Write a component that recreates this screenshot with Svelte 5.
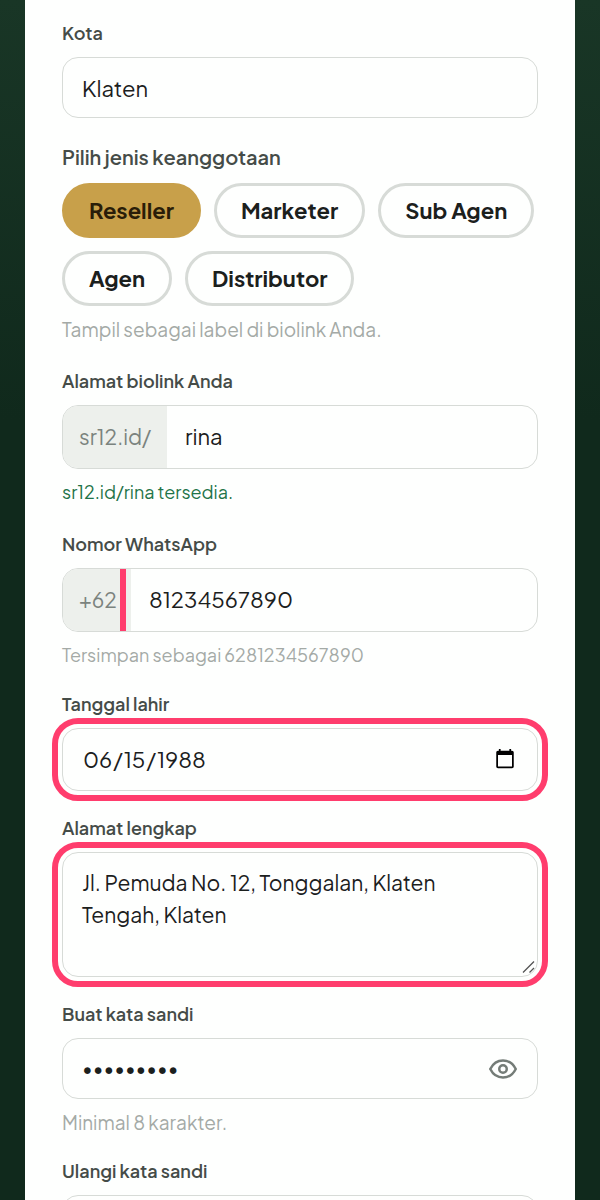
<script lang="ts">
  const types = ["Reseller", "Marketer", "Sub Agen", "Agen", "Distributor"];

  let city = $state("Klaten");
  let membership = $state("Reseller");
  let slug = $state("rina");
  let phone = $state("81234567890");
  let birthDate = $state("1988-06-15");
  let address = $state("Jl. Pemuda No. 12, Tonggalan, Klaten Tengah, Klaten");
  let password = $state("rahasia12");
  let repeat = $state("");
  let showPassword = $state(false);
</script>

<main class="page">
  <form class="card">
    <div class="field">
      <label for="city">Kota</label>
      <input id="city" class="control" type="text" bind:value={city} />
    </div>

    <div class="field wide" role="group" aria-labelledby="type-label">
      <span id="type-label" class="legend">Pilih jenis keanggotaan</span>
      <div class="chips">
        {#each types as type}
          <button
            type="button"
            class="chip"
            class:active={membership === type}
            aria-pressed={membership === type}
            onclick={() => (membership = type)}
          >
            {type}
          </button>
        {/each}
      </div>
      <p class="hint">Tampil sebagai label di biolink Anda.</p>
    </div>

    <div class="field wide">
      <label for="slug">Alamat biolink Anda</label>
      <div class="control split">
        <span class="prefix">sr12.id/</span>
        <input id="slug" type="text" bind:value={slug} />
      </div>
      <p class="hint ok">sr12.id/{slug} tersedia.</p>
    </div>

    <div class="field wide">
      <label for="phone">Nomor WhatsApp</label>
      <div class="control split">
        <span class="prefix marked">+62</span>
        <input id="phone" type="tel" bind:value={phone} />
      </div>
      <p class="hint">Tersimpan sebagai 62{phone}</p>
    </div>

    <div class="field close">
      <label for="birth">Tanggal lahir</label>
      <input id="birth" class="control date highlight" type="date" bind:value={birthDate} />
    </div>

    <div class="field">
      <label for="address">Alamat lengkap</label>
      <textarea id="address" class="control address highlight" bind:value={address}></textarea>
    </div>

    <div class="field">
      <label for="password">Buat kata sandi</label>
      <div class="control secret">
        <input id="password" type={showPassword ? "text" : "password"} bind:value={password} />
        <button
          type="button"
          class="eye"
          aria-label="Tampilkan kata sandi"
          onclick={() => (showPassword = !showPassword)}
        >
          <svg viewBox="0 0 24 24" width="30" height="30">
            <path d="M1.8 12C4 7.6 7.8 5.2 12 5.2S20 7.6 22.2 12C20 16.4 16.2 18.8 12 18.8S4 16.4 1.8 12z" />
            <circle cx="12" cy="12" r="3" />
          </svg>
        </button>
      </div>
      <p class="hint">Minimal 8 karakter.</p>
    </div>

    <div class="field close">
      <label for="repeat">Ulangi kata sandi</label>
      <input id="repeat" class="control" type="password" bind:value={repeat} />
    </div>
  </form>
</main>

<style>
  :global(body) {
    margin: 0;
  }

  .page {
    box-sizing: border-box;
    height: 100vh;
    overflow: hidden;
    padding: 0 25px;
    background: linear-gradient(#193626, #10291c 35%, #10291c);
    color: #1b201d;
    font-family: "Plus Jakarta Sans", Inter, sans-serif;
  }

  .card {
    padding: 19px 37px;
    background: #fefffe;
  }

  .field {
    display: flex;
    flex-direction: column;
    gap: 10px;
  }
  .field + .field {
    margin-top: 23px;
  }
  .field + .wide {
    margin-top: 25px;
  }
  .field + .close {
    margin-top: 22px;
  }

  label,
  .legend {
    color: #454c48;
    font-size: 18px;
    font-weight: 600;
    line-height: 28px;
  }
  .legend {
    font-size: 20px;
  }

  .control {
    box-sizing: border-box;
    width: 100%;
    min-height: 61px;
    margin: 0;
    padding: 0 19px;
    border: 1px solid #d7dbd7;
    border-radius: 16px;
    background: #fefffe;
    color: inherit;
    font-family: inherit;
    font-size: 22px;
    font-weight: 400;
  }

  .chips {
    display: flex;
    flex-wrap: wrap;
    gap: 13px;
    margin-top: 2px;
  }
  .chip {
    height: 55px;
    padding: 0 24px 2px;
    border: 3px solid #d7dbd7;
    border-radius: 28px;
    background: #fefffe;
    color: #1b201d;
    font-family: inherit;
    font-size: 22px;
    font-weight: 700;
  }
  .chip.active {
    border-color: #c8a04a;
    background: #c8a04a;
    color: #2a1d08;
  }

  .hint {
    margin: 0;
    color: #a4aaa6;
    font-size: 19px;
    line-height: 26px;
  }
  .split + .hint {
    font-size: 18px;
  }
  .hint.ok {
    color: #1f7449;
  }

  .split {
    display: flex;
    height: 64px;
    padding: 0;
    overflow: hidden;
  }
  .split input,
  .secret input {
    flex: 1;
    min-width: 0;
    border: 0;
    background: none;
    color: inherit;
    font: inherit;
  }
  .split input {
    padding: 0 18px 2px;
  }
  .prefix {
    display: flex;
    align-items: center;
    padding: 0 16px 2px;
    background: #edf0ec;
    color: #7b837e;
    font-size: 21px;
  }
  .prefix.marked {
    position: relative;
    padding-right: 14px;
  }
  .prefix.marked::after {
    content: "";
    position: absolute;
    top: 0;
    right: 5px;
    bottom: 0;
    width: 6px;
    background: #ff3d6d;
  }

  .highlight {
    outline: 6px solid #ff3d6d;
    outline-offset: 4px;
  }
  .date {
    height: 63px;
    padding-bottom: 2px;
  }
  .address {
    display: block;
    height: 125px;
    padding: 14px 28px 14px 19px;
    font-size: 21px;
    line-height: 32px;
    resize: vertical;
  }
  .address::-webkit-resizer {
    background: url("data:image/svg+xml,%3Csvg xmlns='http://www.w3.org/2000/svg' width='15' height='15'%3E%3Cpath d='M1 11.5 12 .5M7.5 11.5l4.5-4.5' stroke='%23555' stroke-width='1.3'/%3E%3C/svg%3E") no-repeat;
  }

  .secret {
    display: flex;
    align-items: center;
  }
  .secret input {
    padding: 0 0 2px;
    font-size: 20px;
  }
  .eye {
    display: flex;
    padding: 0;
    border: 0;
    background: none;
  }
  .eye svg {
    fill: none;
    stroke: #747c77;
    stroke-width: 2;
    stroke-linecap: round;
    stroke-linejoin: round;
  }
</style>
